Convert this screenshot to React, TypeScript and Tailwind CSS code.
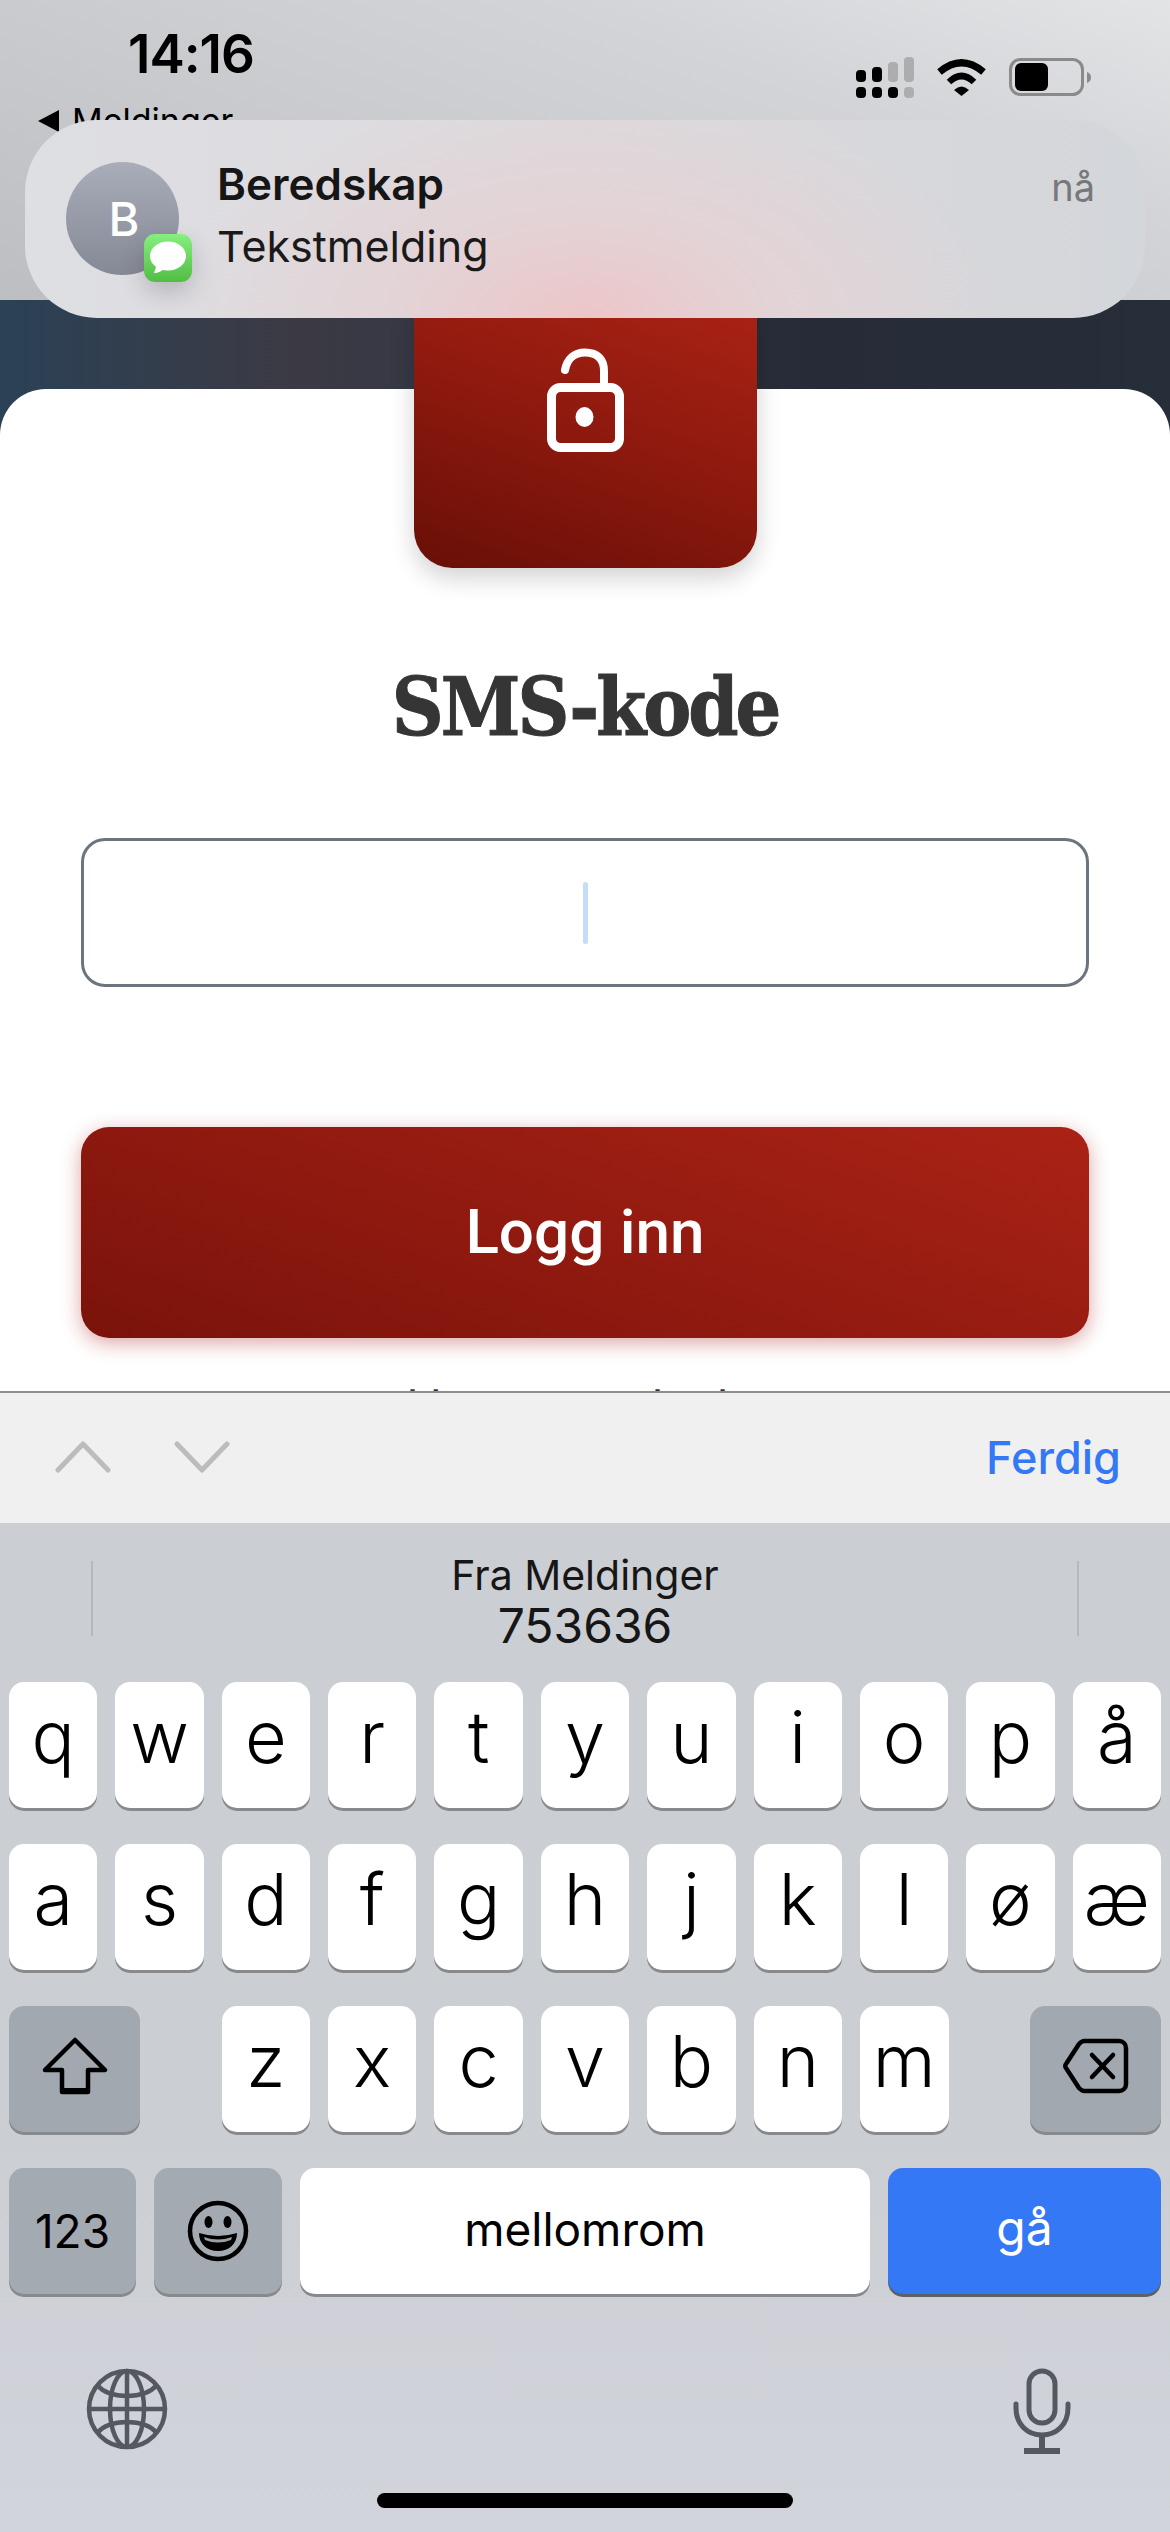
// App.tsx
const row1 = ["q", "w", "e", "r", "t", "y", "u", "i", "o", "p", "å"];
const row2 = ["a", "s", "d", "f", "g", "h", "j", "k", "l", "ø", "æ"];
const row3 = ["z", "x", "c", "v", "b", "n", "m"];

function LetterKey({ label }: { label: string }) {
  return (
    <div className="flex h-[126px] items-start justify-center rounded-[15px] bg-white pt-[15px] text-[72px] leading-[80px] font-light text-black shadow-[0_3px_0_#88898d]">
      {label}
    </div>
  );
}

function StatusIcons() {
  return (
    <svg width="236" height="42" viewBox="0 0 236 42">
      <g fill="#000">
        <rect x="0" y="30" width="10" height="11" rx="4" />
        <rect x="16" y="30" width="10" height="11" rx="4" />
        <rect x="32" y="30" width="10" height="11" rx="4" />
        <rect x="0" y="13" width="10" height="12" rx="4" />
        <rect x="16" y="10" width="10" height="15" rx="4" />
      </g>
      <g fill="#adadaf">
        <rect x="48" y="30" width="10" height="11" rx="4" />
        <rect x="32" y="5" width="10" height="20" rx="4" />
        <rect x="48" y="0" width="10" height="25" rx="4" />
      </g>
      <path d="M83.5 15Q105.5 -3.5 127.5 15" fill="none" stroke="#000" strokeWidth="7" />
      <path d="M93 25Q105.5 13 118 25" fill="none" stroke="#000" strokeWidth="6.5" />
      <path d="M98 33Q105.5 26 113 33L105.5 39Z" fill="#000" />
      <rect x="154.5" y="2.5" width="72" height="35" rx="10" fill="none" stroke="#8a8a8a" strokeWidth="3" />
      <rect x="159" y="6" width="33" height="28" rx="6" fill="#000" />
      <path d="M231 15C234 16 235 18 235 20.500C235 23 234 25 231 26Z" fill="#8a8a8a" />
    </svg>
  );
}

function LockIcon() {
  return (
    <svg width="90" height="110" viewBox="0 0 90 110" fill="none" stroke="#fff">
      <rect x="11.500" y="43.500" width="68" height="60" rx="9" strokeWidth="9" />
      <path d="M64 42V27C64 16 58 8.500 45 8.500C34 8.500 27 15 25 26" strokeWidth="8" strokeLinecap="round" />
      <ellipse cx="44.500" cy="73" rx="9" ry="10" fill="#fff" stroke="none" />
    </svg>
  );
}

function Chevron({ down }: { down?: boolean }) {
  return (
    <svg width="56" height="32" viewBox="0 0 56 32" fill="none" stroke="#bcbcbc" strokeWidth="5" strokeLinecap="round" strokeLinejoin="round">
      <path d={down ? "M3 3L28 29L53 3" : "M3 29L28 3L53 29"} />
    </svg>
  );
}

function ShiftIcon() {
  return (
    <svg width="66" height="58" viewBox="0 0 66 58" fill="none" stroke="#000" strokeWidth="4.500" strokeLinejoin="round">
      <path d="M33 3L63 33H46V55H20V33H3Z" />
      <path d="M20 54H46" strokeWidth="6" />
    </svg>
  );
}

function BackspaceIcon() {
  return (
    <svg width="66" height="56" viewBox="0 0 66 56" fill="none" stroke="#000" strokeWidth="4.500" strokeLinecap="round" strokeLinejoin="round">
      <path d="M21 3H56C60 3 63 6 63 10V46C63 50 60 53 56 53H21C19 53 18 52 16 50L3 30C2 29 2 27 3 26L16 6C18 4 19 3 21 3Z" />
      <path d="M29 17L50 39M50 17L29 39" />
    </svg>
  );
}

function EmojiIcon() {
  return (
    <svg width="62" height="62" viewBox="0 0 62 62">
      <circle cx="31" cy="31" r="28" fill="none" stroke="#000" strokeWidth="4.500" />
      <ellipse cx="21.500" cy="22" rx="4" ry="6" fill="#000" />
      <ellipse cx="40.500" cy="22" rx="4" ry="6" fill="#000" />
      <path d="M12 33Q31 39 50 33C50 44 42 51 31 51C20 51 12 44 12 33Z" fill="#000" />
      <path d="M17 37Q31 42 45 37L44 40Q31 45 18 40Z" fill="#9a9ea5" />
    </svg>
  );
}

function GlobeIcon() {
  return (
    <svg width="82" height="82" viewBox="0 0 82 82" fill="none" stroke="#555860" strokeWidth="4.500">
      <circle cx="41" cy="41" r="38" />
      <ellipse cx="41" cy="41" rx="17" ry="38" />
      <path d="M41 3V79M3 41H79" />
      <path d="M11 17C18 25 29 28 41 28C53 28 64 25 71 17" />
      <path d="M11 65C18 57 29 54 41 54C53 54 64 57 71 65" />
    </svg>
  );
}

function MicIcon() {
  return (
    <svg width="58" height="86" viewBox="0 0 58 86" fill="none" stroke="#555860" strokeWidth="5" strokeLinecap="round">
      <rect x="16" y="3" width="26" height="52" rx="13" />
      <path d="M3 36V40C3 56 14 67 29 67C44 67 55 56 55 40V36" />
      <path d="M29 67V82M11 83H47" strokeLinecap="butt" strokeWidth="6" />
    </svg>
  );
}

function Notification() {
  return (
    <div className="absolute top-[120px] left-[25px] flex h-[198px] w-[1120px] rounded-[72px] bg-[radial-gradient(ellipse_420px_230px_at_50%_100%,#ecc6c8_0%,#e3d3d6_45%,rgba(223,221,225,0)_100%),linear-gradient(90deg,#dedfe3_0%,#dcdadd_50%,#d3d6da_100%)] pt-[42px] pr-[50px] pl-[41px]">
      <div className="relative h-[113px] w-[113px] shrink-0">
        <div className="flex h-[113px] w-[113px] items-center justify-center rounded-full bg-[linear-gradient(180deg,#a9adb9,#858995)] pl-[3px] text-[47px] leading-none font-medium text-white">
          B
        </div>
        <div className="absolute top-[72px] left-[78px] flex h-[48px] w-[48px] items-center justify-center rounded-[11px] bg-[linear-gradient(180deg,#86ef7e,#52bd45)] shadow-[0_10px_24px_rgba(0,0,0,0.18)]">
          <svg width="40" height="36" viewBox="0 0 40 36" fill="#fff">
            <ellipse cx="20" cy="16" rx="18" ry="14.500" />
            <path d="M9 24L6 33C10 33 14 31 17 28Z" />
          </svg>
        </div>
      </div>
      <div className="-mt-[3px] ml-[38px] flex-1">
        <div className="text-[44px] leading-[50px] font-semibold text-[#161616]">Beredskap</div>
        <div className="mt-[12px] text-[43px] leading-[50px] text-[#1a1a1a]">Tekstmelding</div>
      </div>
      <div className="pt-[2px] text-[38px] leading-[46px] text-[#77787a]">nå</div>
    </div>
  );
}

function Keyboard() {
  return (
    <div className="absolute inset-x-0 bottom-0 h-[1141px]">
      <div className="flex h-[132px] items-center border-t-2 border-[#8e8e8e] bg-[#f0f0f1] pr-[49px] pb-[2px] pl-[55px]">
        <Chevron />
        <div className="ml-[63px]">
          <Chevron down />
        </div>
        <div className="ml-auto text-[45px] leading-none font-medium text-[#3478f6]">Ferdig</div>
      </div>
      <div className="h-[1009px] bg-[linear-gradient(180deg,#cbced3_0%,#cbced3_60%,#d2d4db_100%)] px-[9px]">
        <div className="relative h-[159px] pt-[29px] text-center text-[#161616]">
          <div className="absolute top-[38px] left-[82px] h-[75px] w-[2px] bg-[#b5b8bd]" />
          <div className="absolute top-[38px] right-[82px] h-[75px] w-[2px] bg-[#b5b8bd]" />
          <div className="text-[41px] leading-[46px]">Fra Meldinger</div>
          <div className="mt-[2px] text-[48px] leading-[52px]">753636</div>
        </div>
        <div className="grid grid-cols-11 gap-x-[18px]">
          {row1.map((k) => (
            <LetterKey key={k} label={k} />
          ))}
        </div>
        <div className="mt-[36px] grid grid-cols-11 gap-x-[18px]">
          {row2.map((k) => (
            <LetterKey key={k} label={k} />
          ))}
        </div>
        <div className="mt-[36px] flex justify-between">
          <div className="flex h-[126px] w-[131px] items-center justify-center rounded-[15px] bg-[#a2a8b0] pb-[6px] shadow-[0_3px_0_#88898d]">
            <ShiftIcon />
          </div>
          <div className="grid w-[727px] grid-cols-7 gap-x-[18px]">
            {row3.map((k) => (
              <LetterKey key={k} label={k} />
            ))}
          </div>
          <div className="flex h-[126px] w-[131px] items-center justify-center rounded-[15px] bg-[#a2a8b0] pb-[6px] shadow-[0_3px_0_#88898d]">
            <BackspaceIcon />
          </div>
        </div>
        <div className="mt-[36px] flex gap-x-[18px]">
          <div className="flex h-[126px] w-[127px] items-center justify-center rounded-[15px] bg-[#a4aab2] text-[46px] text-black shadow-[0_3px_0_#88898d]">
            123
          </div>
          <div className="flex h-[126px] w-[128px] items-center justify-center rounded-[15px] bg-[#a4aab2] shadow-[0_3px_0_#88898d]">
            <EmojiIcon />
          </div>
          <div className="flex h-[126px] flex-1 items-center justify-center rounded-[15px] bg-white pb-[4px] text-[46px] text-black shadow-[0_3px_0_#88898d]">
            mellomrom
          </div>
          <div className="flex h-[126px] w-[273px] items-center justify-center rounded-[15px] bg-[#3478f6] pb-[6px] text-[48px] text-white shadow-[0_3px_0_#5d6064]">
            gå
          </div>
        </div>
        <div className="mt-[74px] flex items-start justify-between pr-[90px] pl-[77px]">
          <GlobeIcon />
          <MicIcon />
        </div>
      </div>
      <div className="absolute bottom-[24px] left-[377px] h-[15px] w-[416px] rounded-full bg-black" />
    </div>
  );
}

export default function App() {
  return (
    <div className="relative h-[2532px] w-[1170px] overflow-hidden bg-white font-[Inter,sans-serif]">
      <div className="h-[300px] bg-[linear-gradient(200deg,#e3e4e6_0%,#d2d4d7_30%,#bcbec2_100%)]">
        <div className="flex items-start justify-between pt-[24px] pr-[78px] pl-[128px]">
          <div className="text-[53px] leading-[60px] font-semibold tracking-[-1px] text-black">14:16</div>
          <div className="pt-[33px]">
            <StatusIcons />
          </div>
        </div>
        <div className="flex items-center pl-[38px] text-[34px] leading-[44px] text-black">
          <div className="mr-[13px] h-0 w-0 border-y-[11px] border-r-[21px] border-y-transparent border-r-black" />
          Meldinger
        </div>
      </div>
      <div className="h-[135px] bg-[linear-gradient(90deg,#2b4156_0%,#3b3a44_25%,#323744_45%,#262b37_70%,#262e3a_100%)]" />
      <div className="relative -mt-[46px] flex flex-col items-center rounded-t-[46px] bg-white">
        <div className="-mt-[89px] flex h-[268px] w-[343px] justify-center rounded-b-[38px] bg-[linear-gradient(200deg,#ab2215_0%,#8d190e_50%,#680f07_100%)] pt-[44px] shadow-[0_10px_24px_rgba(0,0,0,0.18)]">
          <LockIcon />
        </div>
        <h1 className="mt-[94px] font-['DejaVu_Serif_Condensed','DejaVu_Serif',serif] text-[80px] leading-[90px] font-bold tracking-[-3px] text-[#353535] [-webkit-text-stroke:1px_#353535]">
          SMS-kode
        </h1>
        <div className="mt-[86px] flex h-[149px] w-[1008px] items-center justify-center rounded-[24px] border-[3px] border-[#6c757d] bg-white">
          <div className="h-[62px] w-[5px] rounded-full bg-[#c5dcfb]" />
        </div>
        <button className="mt-[140px] h-[211px] w-[1008px] rounded-[28px] bg-[linear-gradient(200deg,#ab2216,#7a130b)] pb-[3px] font-[Roboto,sans-serif] text-[62px] font-medium text-white shadow-[0_5px_20px_rgba(170,30,30,0.4)]">
          Logg inn
        </button>
        <div className="mt-[43px] font-[Roboto,sans-serif] text-[46px] leading-[54px] text-[#353535]">ikke mottatt kode?</div>
      </div>
      <Keyboard />
      <Notification />
    </div>
  );
}
